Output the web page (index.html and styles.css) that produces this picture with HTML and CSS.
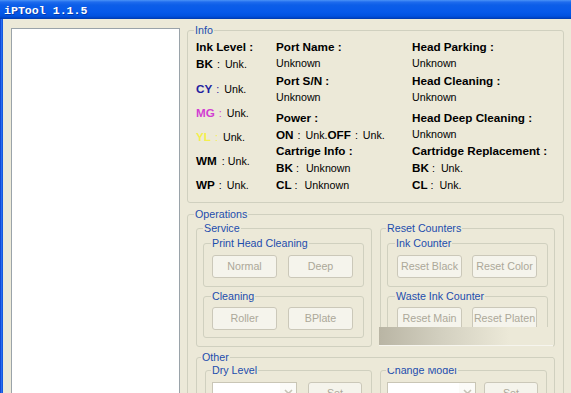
FILE: index.html
```html
<!DOCTYPE html>
<html>
<head>
<meta charset="utf-8">
<title>iPTool 1.1.5</title>
<link rel="stylesheet" href="styles.css">
</head>
<body>
<div class="window">
  <div class="titlebar"><span class="title">iPTool 1.1.5</span></div>
  <div class="client">
    <div class="frame-left"></div>
    <div class="listbox"></div>
    <div class="main">
      <fieldset class="group info">
        <legend>Info</legend>
        <div class="info-grid">
          <div class="col col1">
            <div class="row"><b>Ink Level :</b></div>
            <div class="row"><b>BK</b><span class="sep">:</span>Unk.</div>
            <div class="row tall first-tall"><span class="cy"><b>CY</b><span class="sep">:</span></span>Unk.</div>
            <div class="row tall"><span class="mg"><b>MG</b><span class="sep">:</span></span>Unk.</div>
            <div class="row tall"><span class="yl"><b>YL</b><span class="sep">:</span></span>Unk.</div>
            <div class="row tall"><b>WM</b><span class="sep tight">:</span>Unk.</div>
            <div class="row tall"><b>WP</b><span class="sep">:</span>Unk.</div>
          </div>
          <div class="col col2">
            <div class="row"><b>Port Name :</b></div>
            <div class="row">Unknown</div>
            <div class="row"><b>Port S/N :</b></div>
            <div class="row">Unknown</div>
            <div class="row push"><b>Power :</b></div>
            <div class="row"><b>ON</b><span class="sep">:</span>Unk.<b>OFF</b><span class="sep">:</span>Unk.</div>
            <div class="row pull"><b>Cartrige Info :</b></div>
            <div class="row"><b>BK</b><span class="sep2">:</span>Unknown</div>
            <div class="row"><b>CL</b><span class="sep2">:</span>Unknown</div>
          </div>
          <div class="col col3">
            <div class="row"><b>Head Parking :</b></div>
            <div class="row">Unknown</div>
            <div class="row"><b>Head Cleaning :</b></div>
            <div class="row">Unknown</div>
            <div class="row push"><b>Head Deep Cleaning :</b></div>
            <div class="row">Unknown</div>
            <div class="row pull"><b>Cartridge Replacement :</b></div>
            <div class="row"><b>BK</b><span class="sep3">:</span>Unk.</div>
            <div class="row"><b>CL</b><span class="sep3">:</span>Unk.</div>
          </div>
        </div>
      </fieldset>

      <fieldset class="group ops">
        <legend>Operations</legend>
        <div class="ops-grid">
          <fieldset class="group service">
            <legend>Service</legend>
            <fieldset class="group sub first">
              <legend>Print Head Cleaning</legend>
              <div class="btns"><button class="btn" disabled>Normal</button><button class="btn" disabled>Deep</button></div>
            </fieldset>
            <fieldset class="group sub second">
              <legend>Cleaning</legend>
              <div class="btns"><button class="btn" disabled>Roller</button><button class="btn" disabled>BPlate</button></div>
            </fieldset>
          </fieldset>
          <fieldset class="group reset">
            <legend>Reset Counters</legend>
            <fieldset class="group sub first counter">
              <legend>Ink Counter</legend>
              <div class="btns"><button class="btn" disabled>Reset Black</button><button class="btn" disabled>Reset Color</button></div>
            </fieldset>
            <fieldset class="group sub second counter">
              <legend>Waste Ink Counter</legend>
              <div class="btns"><button class="btn" disabled>Reset Main</button><button class="btn" disabled>Reset Platen</button></div>
            </fieldset>
          </fieldset>
        </div>
        <fieldset class="group other">
          <legend>Other</legend>
          <div class="other-grid">
            <fieldset class="group sel dry">
              <legend>Dry Level</legend>
              <div class="ctrl">
                <div class="combo"><span class="arrow"><svg width="9" height="6" viewBox="0 0 9 6"><path d="M1 1 L4.5 4.5 L8 1" fill="none" stroke="#c6c4b6" stroke-width="1.6"/></svg></span></div>
                <button class="btn set" disabled>Set</button>
              </div>
            </fieldset>
            <fieldset class="group sel model">
              <legend>Change Model</legend>
              <div class="ctrl">
                <div class="combo"><span class="arrow"><svg width="9" height="6" viewBox="0 0 9 6"><path d="M1 1 L4.5 4.5 L8 1" fill="none" stroke="#c6c4b6" stroke-width="1.6"/></svg></span></div>
                <button class="btn set" disabled>Set</button>
              </div>
            </fieldset>
          </div>
        </fieldset>
      </fieldset>
    </div>
  </div>
  <div class="glitch"></div>
</div>
</body>
</html>
```

FILE: styles.css
```css
* { box-sizing: border-box; }
html, body { margin: 0; padding: 0; }
body {
  background: #ECE9D8;
  font-family: "Liberation Sans", Arial, sans-serif;
  font-size: 10.7px;
  color: #000;
}
.window {
  position: relative;
  width: 571px;
  height: 393px;
  overflow: hidden;
  background: #ECE9D8;
}
.titlebar {
  height: 19px;
  display: flex;
  align-items: center;
  padding: 1px 0 0 4px;
  background: linear-gradient(to bottom, #4a93f7 0px, #1f6cee 2px, #0c5ee8 5px, #0659ea 12px, #0152e0 16px, #0042c4 18px, #003aa8 19px);
}
.title {
  font: 700 11.6px "Liberation Mono", monospace;
  color: #fff;
  text-shadow: 1px 1px 0 rgba(10, 24, 100, 0.45);
}
.client {
  display: flex;
  align-items: flex-start;
  height: 374px;
}
.frame-left {
  flex: none;
  width: 3px;
  height: 100%;
  background: linear-gradient(to right, #0839c9, #2a6ef0 50%, #0b4fd6);
}
.listbox {
  flex: none;
  width: 169px;
  height: 380px;
  margin: 9px 0 0 8px;
  background: #fff;
  border: 1px solid #9aa3a9;
}
.main {
  flex: none;
  width: 377px;
  margin-left: 7px;
  padding-top: 5px;
}
.group {
  margin: 0;
  min-width: 0;
  border: 1px solid #d0d0bf;
  border-radius: 3px;
  padding: 0;
}
legend {
  padding: 0 1px;
  margin-left: -1px;
  font-size: 10.7px;
  line-height: 13px;
  color: #1d4dad;
  white-space: nowrap;
}
b { font-weight: 700; font-size: 11.7px; }

/* Info */
.info { padding: 1px 8px 5px 8px; }
.info > legend { margin-left: -2px; }
.info-grid {
  display: grid;
  grid-template-columns: 80px 136px 1fr;
}
.row { line-height: 17px; height: 17px; white-space: nowrap; }
.col1 .tall { line-height: 24px; height: 24px; }
.col1 .first-tall { margin-top: 4.5px; }
.push { margin-top: 3px; }
.pull { margin-top: -1px; }
.sep { margin: 0 5px 0 4px; }
.sep.tight { margin: 0 3px 0 5px; }
.sep2 { margin: 0 7px 0 3px; }
.sep3 { margin: 0 6px 0 3px; }
.cy { color: #1f1fa0; }
.mg { color: #d23ed2; }
.yl { color: #f4f04c; }

/* Operations */
.ops { margin-top: 5px; padding: 1px 8px 30px 8px; }
.ops > legend { margin-left: -2px; }
.ops-grid {
  display: grid;
  grid-template-columns: 176px 175px;
  column-gap: 8px;
}
.service { padding: 2px 7px 8px 6px; }
.service > legend { margin-left: 0; }
.reset { padding: 2px 6px 8px 6px; }
.sub.first { padding: 5px 10px 8px 8px; }
.sub.second { margin-top: 3px; padding: 4px 10px 7px 8px; }
.sub.counter { padding-left: 9px; padding-right: 9px; }
.sub.counter > legend { margin-left: -2px; }
.btns { display: flex; gap: 11px; }
.counter .btns { gap: 10px; }
.btn {
  flex: none;
  width: 65px;
  height: 23px;
  padding: 0;
  margin: 0;
  font-family: "Liberation Sans", Arial, sans-serif;
  font-size: 10.7px;
  color: #aca899;
  background: #f5f4ec;
  border: 1px solid #cbc8b9;
  border-radius: 3px;
  white-space: nowrap;
}

/* Other */
.other { margin-top: 4px; padding: 0 7px 20px 8px; }
.other > legend { margin-left: -4px; }
.other-grid {
  display: grid;
  grid-template-columns: 167px 167px;
  column-gap: 8px;
}
.sel { padding: 5px 6px 12px 6px; }
.ctrl { display: flex; gap: 11px; }
.model .ctrl { gap: 8px; }
.combo {
  flex: none;
  width: 85px;
  height: 21px;
  background: #fff;
  border: 1px solid #c9c6b6;
  display: flex;
  justify-content: flex-end;
}
.model .combo { width: 89px; }
.arrow {
  width: 16px;
  display: flex;
  align-items: center;
  justify-content: center;
  background: #fbfbf8;
}
.btn.set { width: 54px; }

/* rendering artifact over the counters */
.glitch {
  position: absolute;
  left: 379px;
  top: 327px;
  width: 174px;
  height: 41px;
  background:
    linear-gradient(to bottom, transparent 30px, #d0d0bf 30px, #d0d0bf 31px, transparent 31px),
    linear-gradient(to bottom, transparent 18px, #f6f5ee 18px, #f6f5ee 19px, transparent 19px),
    linear-gradient(to right, #b9b5a4 0%, #d2cfbf 35%, #ece9d8 75%) top left / 100% 18px no-repeat,
    #ECE9D8;
}
```
